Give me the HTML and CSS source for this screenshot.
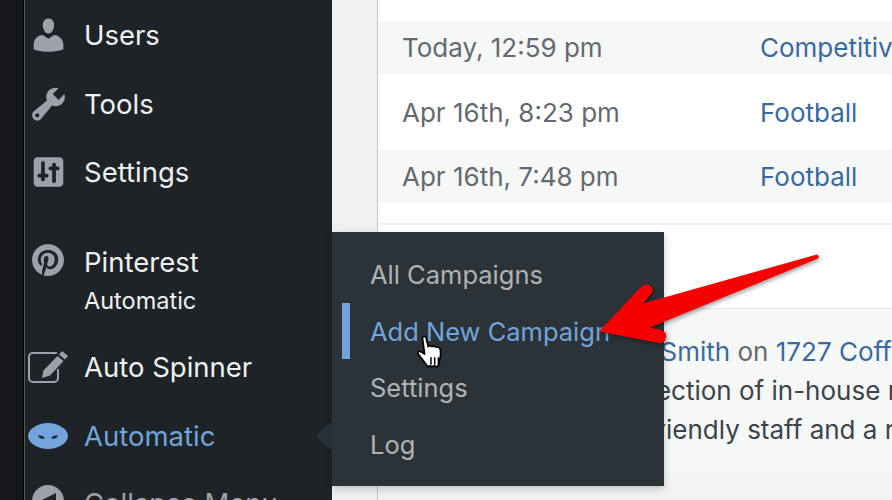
FILE: index.html
```html
<!DOCTYPE html>
<html>
<head>
  <title>Automatic - Dashboard</title>
  <link rel="stylesheet" href="styles.css">
</head>
<body>
  <div class="page">
    <div class="edge"></div>
    <div class="sidebar">
      <div class="menu-item">
        <svg class="icon icon-large" viewBox="0 0 20 20"><path d="M10 9.25c-2.27 0-2.73-3.44-2.73-3.44C7 4.02 7.82 2 9.97 2c2.16 0 2.98 2.02 2.71 3.81 0 0-.41 3.44-2.68 3.44zm0 2.57L12.72 10c2.39 0 4.52 2.33 4.52 4.53v2.49s-3.65 1.13-7.24 1.13c-3.65 0-7.24-1.13-7.24-1.13v-2.49c0-2.25 1.94-4.48 4.47-4.48z"/></svg>
        <span>Users</span>
      </div>
      <div class="menu-item">
        <svg class="icon icon-large" viewBox="0 0 20 20"><path d="M16.68 9.77c-1.34 1.34-3.3 1.67-4.95.99l-5.41 6.52c-.99.99-2.59.99-3.58 0s-.99-2.59 0-3.57l6.52-5.42c-.68-1.65-.35-3.61.99-4.95 1.28-1.28 3.12-1.62 4.72-1.06l-2.89 2.89 2.82 2.82 2.86-2.87c.53 1.58.18 3.39-1.08 4.65zM3.81 16.21c.4.39 1.04.39 1.43 0 .4-.4.4-1.04 0-1.43-.39-.4-1.03-.4-1.43 0-.39.39-.39 1.03 0 1.43z"/></svg>
        <span>Tools</span>
      </div>
      <div class="menu-item">
        <svg class="icon" viewBox="0 0 20 20"><path d="M18 16V4c0-1.1-.9-2-2-2H4c-1.1 0-2 .9-2 2v12c0 1.1.9 2 2 2h12c1.1 0 2-.9 2-2zM8 11h1c.55 0 1 .45 1 1s-.45 1-1 1H8v1c0 .55-.45 1-1 1s-1-.45-1-1v-1H5c-.55 0-1-.45-1-1s.45-1 1-1h1V5c0-.55.45-1 1-1s1 .45 1 1v6zm7-2h-1v6c0 .55-.45 1-1 1s-1-.45-1-1V9h-1c-.55 0-1-.45-1-1s.45-1 1-1h1V6c0-.55.45-1 1-1s1 .45 1 1v1h1c.55 0 1 .45 1 1s-.45 1-1 1z"/></svg>
        <span>Settings</span>
      </div>
      <div class="menu-item menu-item-spaced">
        <svg class="icon icon-round" viewBox="0 0 24 24"><path d="M12.017 0C5.396 0 .029 5.367.029 11.987c0 5.079 3.158 9.417 7.618 11.162-.105-.949-.199-2.403.041-3.439.219-.937 1.406-5.957 1.406-5.957s-.359-.72-.359-1.781c0-1.663.967-2.911 2.168-2.911 1.024 0 1.518.769 1.518 1.688 0 1.029-.653 2.567-.992 3.992-.285 1.193.6 2.165 1.775 2.165 2.128 0 3.768-2.245 3.768-5.487 0-2.861-2.063-4.869-5.008-4.869-3.41 0-5.409 2.562-5.409 5.199 0 1.033.394 2.143.889 2.741.099.12.112.225.085.345-.09.375-.293 1.199-.334 1.363-.053.225-.172.271-.401.165-1.495-.69-2.433-2.878-2.433-4.646 0-3.776 2.748-7.252 7.92-7.252 4.158 0 7.392 2.967 7.392 6.923 0 4.135-2.607 7.462-6.233 7.462-1.214 0-2.354-.629-2.758-1.379l-.749 2.848c-.269 1.045-1.004 2.352-1.498 3.146 1.123.345 2.306.535 3.55.535 6.607 0 11.985-5.365 11.985-11.987C23.97 5.39 18.592.026 11.985.026L12.017 0z"/></svg>
        <span>Pinterest</span>
      </div>
      <div class="menu-sub">Automatic</div>
      <div class="menu-item menu-item-tall">
        <svg class="icon icon-wide" viewBox="0 0 40 32">
          <path class="icon-line" d="M29 2H5a4 4 0 0 0-4 4v21a4 4 0 0 0 4 4h21a4 4 0 0 0 4-4v-9"/>
          <path d="M34 0l6 5-3 3.500-6-5zM29.500 5l6 5-13.500 14.500-8 2.500 1.500-7.500z"/>
        </svg>
        <span>Auto Spinner</span>
      </div>
      <div class="menu-item menu-item-current">
        <svg class="icon icon-wide icon-mask" viewBox="0 0 40 26">
          <path d="M20 0C30 0 40 6 40 13S30 26 20 26 0 20 0 13 10 0 20 0z"/>
          <path class="icon-eye" d="M10 12.500c3 0 5.500.5 7 2.500-2 1.500-5.500 1-7-2.500zM30 12.500c-3 0-5.500.5-7 2.500 2 1.500 5.500 1 7-2.500z"/>
        </svg>
        <span>Automatic</span>
        <div class="menu-pointer"></div>
      </div>
      <div class="menu-item menu-item-muted">
        <svg class="icon icon-round" viewBox="0 0 32 32">
          <circle cx="16" cy="16" r="16"/>
          <path class="icon-eye" d="M24 8v16L8 16z"/>
        </svg>
        <span>Collapse Menu</span>
      </div>
    </div>

    <div class="content">
      <div class="panel">
        <div class="table-row row-shaded">
          <div class="date-cell">Today, 12:59 pm</div>
          <a class="link">Competitive</a>
        </div>
        <div class="table-row row-tall">
          <div class="date-cell">Apr 16th, 8:23 pm</div>
          <a class="link">Football</a>
        </div>
        <div class="table-row row-shaded">
          <div class="date-cell">Apr 16th, 7:48 pm</div>
          <a class="link">Football</a>
        </div>
        <div class="table-end"></div>
        <div class="comment">
          <div class="comment-line comment-head">From <a class="link">Joe Smith</a> on <a class="link">1727 Coffee House</a></div>
          <div class="comment-line comment-second">Loved their selection of in-house roasted beans.</div>
          <div class="comment-line comment-third">Super friendly staff and a really nice place.</div>
        </div>
      </div>
    </div>

    <div class="flyout">
      <div class="flyout-item">All Campaigns</div>
      <div class="flyout-item flyout-current">Add New Campaign</div>
      <div class="flyout-item">Settings</div>
      <div class="flyout-item">Log</div>
    </div>

    <svg class="red-arrow" viewBox="590 245 240 110">
      <defs>
        <linearGradient id="arrowFill" x1="0" y1="0" x2="1" y2="1">
          <stop offset="0" stop-color="#ff0000"/>
          <stop offset="0.6" stop-color="#f40000"/>
          <stop offset="1" stop-color="#e00000"/>
        </linearGradient>
      </defs>
      <path fill="url(#arrowFill)" d="M817 254.500Q820 256 818 258.500L650 327.500L661 330Q667 332 666 337Q665 344 659 343L599 331.500L640 288Q645 283 650 285.500Q654 288 652 293L643 303.500Z"/>
    </svg>

    <svg class="hand-cursor" viewBox="2 0 25 32">
      <path fill="#fff" stroke="#000" stroke-width="1.600" stroke-linejoin="round" d="M6 3c0-2 3-2.500 3.500 0l2 8c1-1.500 3-1 3.500 0 1-1 3-.500 3.500 .500 1.500-.5 3.500 0 4 1.500 1 3 .5 8-.5 12l-1 4-2 1-2-1-2 1-2-1-2 1-2-3-7-9c-1-2 1-3.500 3-2l3 2z"/>
      <path stroke="#000" stroke-width="1.400" d="M14 21v7M17.500 21v7M21 21v7"/>
    </svg>
  </div>
</body>
</html>
```

FILE: styles.css
```css
html, body {
  margin: 0;
  height: 100%;
}

body {
  font-family: Inter, "Liberation Sans", sans-serif;
  overflow: hidden;
}

.page {
  position: relative;
  display: flex;
  width: 892px;
  height: 500px;
  overflow: hidden;
  background-color: #f0f0f1;
}

.edge {
  position: relative;
  z-index: 1;
  flex: 0 0 23px;
  background-color: #15171a;
  border-right: 1px solid #000;
  box-shadow: 1px 0 0 #555a5f;
}

.sidebar {
  flex: 0 0 308px;
  box-sizing: border-box;
  padding-top: 1px;
  background-color: #1d2327;
  color: #f0f0f1;
}

.menu-item {
  position: relative;
  display: flex;
  align-items: center;
  height: 68.5px;
  font-size: 27.5px;
}

.menu-item span {
  margin-left: 60px;
  white-space: nowrap;
}

.menu-item-spaced {
  height: 42px;
  margin-top: 34px;
}

.menu-item-tall {
  height: 69.5px;
}

.menu-sub {
  height: 46px;
  margin-top: 4px;
  padding-left: 60px;
  font-size: 23.5px;
  line-height: 28px;
}

.menu-item-current {
  color: #72a5dc;
}

.menu-item-muted {
  margin-top: -2px;
  color: #9ca2a7;
}

.icon {
  position: absolute;
  left: 6px;
  top: 50%;
  width: 37px;
  height: 37px;
  transform: translateY(-50%);
  fill: #9ca2a7;
}

.icon-large {
  left: 4px;
  width: 41px;
  height: 41px;
}

.icon-round {
  left: 8px;
  width: 32px;
  height: 32px;
  margin-top: -2px;
}

.icon-wide {
  left: 4px;
  width: 40px;
  height: 32px;
}

.icon-mask {
  height: 26px;
}

.menu-item-current .icon {
  fill: #72a5dc;
}

.icon-line {
  fill: none;
  stroke: #9ca2a7;
  stroke-width: 2;
}

.icon-eye {
  fill: #1d2327;
}

.menu-pointer {
  position: absolute;
  right: 0;
  top: 50%;
  margin-top: -15px;
  border-style: solid;
  border-width: 15px 16px 15px 0;
  border-color: transparent #2c3338 transparent transparent;
}

.content {
  flex: 1;
  padding-left: 45px;
}

.panel {
  box-sizing: border-box;
  height: 500px;
  padding-top: 21px;
  border-left: 1px solid #c3c4c7;
  background-color: #fff;
  font-size: 26px;
  white-space: nowrap;
  overflow: hidden;
}

.table-row {
  display: flex;
  align-items: center;
  height: 53px;
  padding-left: 24px;
}

.row-shaded {
  background-color: #f6f7f7;
}

.row-tall {
  height: 76px;
}

.date-cell {
  flex: 0 0 358px;
  color: #646970;
}

.link {
  color: #39699e;
}

.table-end {
  height: 2px;
  margin: 20px 0 83px;
  background-color: #f0f0f1;
}

.comment {
  height: 191px;
  padding: 23px 0 0 24px;
  border-top: 1px solid #e6e7e8;
  background: linear-gradient(#f6f7f7 70%, #eeeeef);
  color: #3c434a;
}

.comment-line {
  height: 39px;
  line-height: 39px;
}

.comment-head {
  color: #646970;
  padding-left: 136px;
}

.comment-second {
  padding-left: 74px;
}

.comment-third {
  padding-left: 164px;
}

.flyout {
  position: absolute;
  left: 332px;
  top: 232px;
  width: 332px;
  height: 254px;
  box-sizing: border-box;
  padding-top: 15px;
  background-color: #2c3338;
  box-shadow: 0 3px 8px rgba(0, 0, 0, 0.2);
  color: #b0b3b6;
  font-size: 25.5px;
}

.flyout-item {
  position: relative;
  height: 56.500px;
  line-height: 56.500px;
  padding-left: 38px;
}

.flyout-current {
  color: #72a5dc;
}

.flyout-current::before {
  content: "";
  position: absolute;
  left: 10px;
  top: -0.5px;
  width: 8px;
  height: 56px;
  background-color: #72a5dc;
}

.red-arrow {
  position: absolute;
  left: 590px;
  top: 245px;
  width: 240px;
  height: 110px;
  filter: drop-shadow(1px 2px 2px rgba(0, 0, 0, 0.4));
}

.hand-cursor {
  position: absolute;
  left: 417px;
  top: 335px;
  width: 29px;
  height: 34px;
}
```
